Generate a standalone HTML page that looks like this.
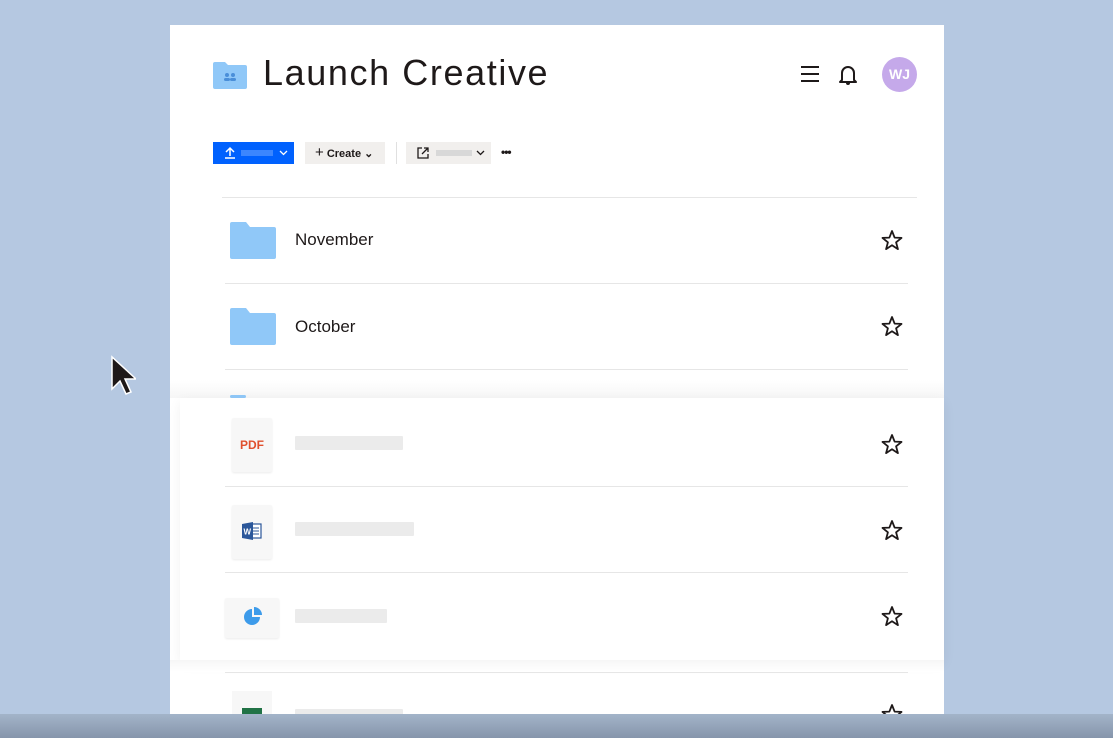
<!DOCTYPE html>
<html><head><style>
*{margin:0;padding:0;box-sizing:border-box}
body{width:1113px;height:738px;background:#b5c8e1;position:relative;overflow:hidden;font-family:"Liberation Sans",sans-serif;color:#1e1919}
.a{position:absolute}
.card{left:170px;top:25px;width:774px;height:700px;background:#fff}
.line{height:1px;background:#e6e6e6}
.bar{background:#ebebeb;height:14px;border-radius:1px}
.row{font-size:17px}
</style></head><body>
<div class="a card"></div>
<svg class="a" style="left:213px;top:61px" width="34" height="28" viewBox="0 0 34 28"><path d="M0 3a2 2 0 0 1 2-2h10l3 3h17a2 2 0 0 1 2 2v20a2 2 0 0 1-2 2H2a2 2 0 0 1-2-2z" fill="#90c8f8"/><circle cx="14" cy="14" r="2" fill="#4a8fd9"/><circle cx="20" cy="14" r="2" fill="#4a8fd9"/><rect x="11" y="17" width="6" height="3" rx="1.5" fill="#4a8fd9"/><rect x="17" y="17" width="6" height="3" rx="1.5" fill="#4a8fd9"/></svg>
<div class="a" style="left:263px;top:52px;font-size:36px;letter-spacing:1.6px">Launch Creative</div>
<svg class="a" style="left:800px;top:65px" width="20" height="18" viewBox="0 0 20 18"><path d="M1 2h18M1 9h18M1 16h18" stroke="#1e1919" stroke-width="2"/></svg>
<svg class="a" style="left:837px;top:63px" width="22" height="24" viewBox="0 0 22 24"><path d="M5 17V10a6 6 0 0 1 12 0v7l2 2H3z" fill="none" stroke="#1e1919" stroke-width="2" stroke-linejoin="round"/><path d="M9 20a2 2 0 0 0 4 0" fill="#1e1919"/></svg>
<div class="a" style="left:882px;top:57px;width:35px;height:35px;border-radius:50%;background:#c5a9ea;color:#fff;font-size:14px;font-weight:bold;text-align:center;line-height:35px">WJ</div>
<div class="a" style="left:213px;top:142px;width:81px;height:22px;background:#0061fe"></div>
<svg class="a" style="left:224px;top:146px" width="12" height="13" viewBox="0 0 12 13"><path d="M6 10V2M2 6l4-4 4 4M1 12h10" stroke="#fff" stroke-width="1.5" fill="none"/></svg>
<div class="a" style="left:241px;top:150px;width:32px;height:6px;background:#3c86fe"></div>
<svg class="a" style="left:279px;top:150px" width="9" height="6" viewBox="0 0 9 6"><path d="M1 1l3.5 3.5L8 1" stroke="#fff" stroke-width="1.3" fill="none"/></svg>
<div class="a" style="left:305px;top:142px;width:80px;height:22px;background:#f1efed;font-size:11px;font-weight:bold;line-height:22px;padding-left:10px"><span style="font-size:15px;font-weight:normal">+</span> Create &#8964;</div>
<div class="a" style="left:396px;top:142px;width:1px;height:22px;background:#e0e0e0"></div>
<div class="a" style="left:406px;top:142px;width:85px;height:22px;background:#f1efed"></div>
<svg class="a" style="left:417px;top:147px" width="12" height="12" viewBox="0 0 12 12"><path d="M5 1H1v10h10V7M7 1h4v4M11 1L5 7" stroke="#1e1919" stroke-width="1.3" fill="none"/></svg>
<div class="a" style="left:436px;top:150px;width:36px;height:6px;background:#d8d8d8"></div>
<svg class="a" style="left:476px;top:150px" width="9" height="6" viewBox="0 0 9 6"><path d="M1 1l3.5 3.5L8 1" stroke="#1e1919" stroke-width="1.3" fill="none"/></svg>
<div class="a" style="left:501px;top:145px;font-size:12px;font-weight:bold;letter-spacing:-1px">•••</div>
<div class="a line" style="left:222px;top:197px;width:695px"></div>
<svg class="a" style="left:230px;top:221px" width="46" height="38" viewBox="0 0 46 38"><path d="M0 3a2 2 0 0 1 2-2h14l4 5h24a2 2 0 0 1 2 2v28a2 2 0 0 1-2 2H2a2 2 0 0 1-2-2z" fill="#90c8f8"/></svg>
<div class="a row" style="left:295px;top:230px">November</div>
<div class="a line" style="left:225px;top:283px;width:683px"></div>
<svg class="a" style="left:230px;top:307px" width="46" height="38" viewBox="0 0 46 38"><path d="M0 3a2 2 0 0 1 2-2h14l4 5h24a2 2 0 0 1 2 2v28a2 2 0 0 1-2 2H2a2 2 0 0 1-2-2z" fill="#90c8f8"/></svg>
<div class="a row" style="left:295px;top:317px">October</div>
<div class="a line" style="left:225px;top:369px;width:683px"></div>
<div class="a" style="left:170px;top:380px;width:774px;height:18px;background:linear-gradient(#fff,#f6f6f6)"></div>
<div class="a" style="left:230px;top:395px;width:16px;height:3px;background:#90c8f8;border-radius:2px"></div>
<div class="a" style="left:180px;top:398px;width:764px;height:262px;background:#fff;box-shadow:0 4px 12px rgba(0,0,0,0.06)"></div>
<div class="a" style="left:232px;top:418px;width:40px;height:54px;background:#f7f7f7;border-radius:2px;box-shadow:0 1px 2px rgba(0,0,0,0.08);color:#e0502e;font-size:12px;font-weight:bold;text-align:center;line-height:54px">PDF</div>
<div class="a bar" style="left:295px;top:436px;width:108px"></div>
<div class="a line" style="left:225px;top:486px;width:683px"></div>
<div class="a" style="left:232px;top:505px;width:40px;height:54px;background:#f7f7f7;border-radius:2px;box-shadow:0 1px 2px rgba(0,0,0,0.08)"></div>
<svg class="a" style="left:242px;top:521px" width="20" height="20" viewBox="0 0 20 20"><rect x="8" y="3" width="11" height="14" fill="#fff" stroke="#2b579a" stroke-width="1.2"/><path d="M10 7h7M10 10h7M10 13h7" stroke="#2b579a"/><path d="M0 3l11-2v18L0 17z" fill="#2b579a"/><text x="1.5" y="13.5" font-size="8" font-weight="bold" fill="#fff" font-family="Liberation Sans">W</text></svg>
<div class="a bar" style="left:295px;top:522px;width:119px"></div>
<div class="a line" style="left:225px;top:572px;width:683px"></div>
<div class="a" style="left:225px;top:598px;width:54px;height:40px;background:#f7f7f7;border-radius:2px;box-shadow:0 1px 2px rgba(0,0,0,0.08)"></div>
<svg class="a" style="left:243px;top:607px" width="20" height="20" viewBox="0 0 20 20"><path d="M9 2a8 8 0 1 0 8 8H9z" fill="#3d9bea"/><path d="M11 0a8 8 0 0 1 8 8h-8z" fill="#3d9bea"/></svg>
<div class="a bar" style="left:295px;top:609px;width:92px"></div>
<svg class="a" style="left:0;top:0" width="1113" height="738">
<defs><path id="st" d="M0 -10L2.6 -3.4 9.5 -3.1 4.1 1.3 5.9 8.1 0 4.2 -5.9 8.1 -4.1 1.3 -9.5 -3.1 -2.6 -3.4Z" fill="none" stroke="#1e1919" stroke-width="1.8" stroke-linejoin="round"/></defs>
<use href="#st" x="892" y="241"/><use href="#st" x="892" y="327"/><use href="#st" x="892" y="445"/><use href="#st" x="892" y="531"/><use href="#st" x="892" y="617"/><use href="#st" x="892" y="715"/>
</svg>
<div class="a" style="left:170px;top:660px;width:774px;height:12px;background:linear-gradient(#f6f6f6,#fff)"></div>
<div class="a line" style="left:225px;top:672px;width:683px"></div>
<div class="a" style="left:232px;top:691px;width:40px;height:40px;background:#f7f7f7"></div>
<div class="a" style="left:242px;top:708px;width:20px;height:8px;background:#217346"></div>
<div class="a bar" style="left:295px;top:709px;width:108px"></div>
<svg class="a" style="left:110px;top:355px" width="26" height="42" viewBox="0 0 26 42"><path d="M2 2v32l8-8 6 13 5-2-6-13h11z" fill="#1e1919" stroke="#fff" stroke-width="1.5"/></svg>
<div class="a" style="left:0;top:714px;width:1113px;height:24px;background:linear-gradient(#a3b4c9,#8695ab)"></div>
</body></html>
